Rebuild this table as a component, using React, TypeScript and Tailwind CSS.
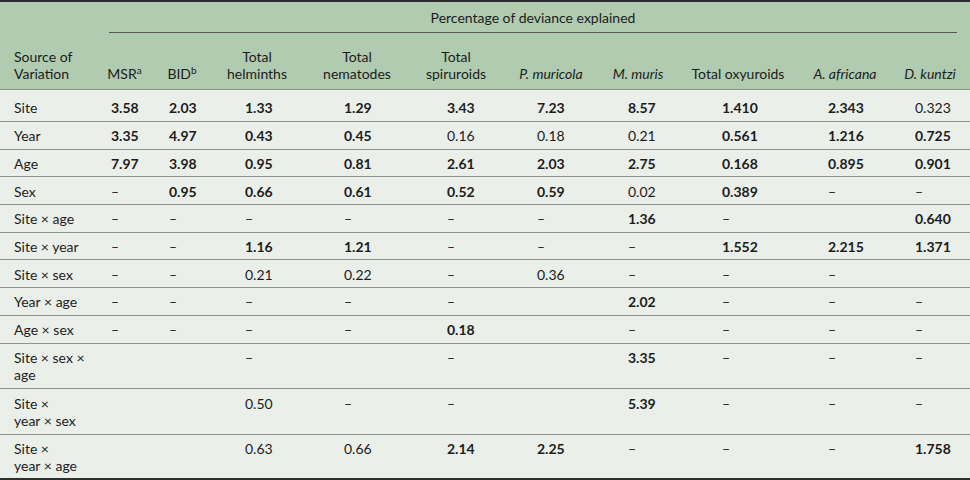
import React from "react";

// column template shared by header and body rows
const GRID =
  "grid grid-cols-[95px_59px_56px_94px_106px_92px_98px_76px_124px_90px_80px]";

// left offset of the numbers in each data column (numbers are left-aligned in a centred block)
const NUM_PAD = [
  "pl-[16px]",
  "pl-[15px]",
  "pl-[35px]",
  "pl-[40px]",
  "pl-[37px]",
  "pl-[35px]",
  "pl-[28px]",
  "pl-[46px]",
  "pl-[28px]",
  "pl-[25px]",
];

type Cell = string; // "*" prefix means bold, "" means empty

const rows: { label: string[]; values: Cell[] }[] = [
  { label: ["Site"], values: ["*3.58", "*2.03", "*1.33", "*1.29", "*3.43", "*7.23", "*8.57", "*1.410", "*2.343", "0.323"] },
  { label: ["Year"], values: ["*3.35", "*4.97", "*0.43", "*0.45", "0.16", "0.18", "0.21", "*0.561", "*1.216", "*0.725"] },
  { label: ["Age"], values: ["*7.97", "*3.98", "*0.95", "*0.81", "*2.61", "*2.03", "*2.75", "*0.168", "*0.895", "*0.901"] },
  { label: ["Sex"], values: ["–", "*0.95", "*0.66", "*0.61", "*0.52", "*0.59", "0.02", "*0.389", "–", "–"] },
  { label: ["Site × age"], values: ["–", "–", "–", "–", "–", "–", "*1.36", "–", "", "*0.640"] },
  { label: ["Site × year"], values: ["–", "–", "*1.16", "*1.21", "–", "–", "–", "*1.552", "*2.215", "*1.371"] },
  { label: ["Site × sex"], values: ["–", "–", "0.21", "0.22", "–", "0.36", "–", "–", "–", ""] },
  { label: ["Year × age"], values: ["–", "–", "–", "–", "–", "", "*2.02", "–", "–", "–"] },
  { label: ["Age × sex"], values: ["–", "–", "–", "–", "*0.18", "", "–", "–", "–", "–"] },
  { label: ["Site × sex ×", "age"], values: ["", "", "–", "", "–", "", "*3.35", "–", "–", "–"] },
  { label: ["Site ×", "year × sex"], values: ["", "", "0.50", "–", "–", "", "*5.39", "–", "–", "–"] },
  { label: ["Site ×", "year × age"], values: ["", "", "0.63", "0.66", "*2.14", "*2.25", "–", "–", "–", "*1.758"] },
];

function HeaderLabel({ children }: { children: React.ReactNode }) {
  return (
    <div className="flex items-end justify-center text-center whitespace-nowrap">
      <div>{children}</div>
    </div>
  );
}

export default function App() {
  return (
    <div
      className="w-[970px] h-[480px] overflow-hidden bg-[#ebefea] text-[#1c1c1c] text-[14px] leading-[17px]"
      style={{ fontFamily: "Lato, 'Noto Sans', sans-serif" }}
    >
      <div className="h-[480px] flex flex-col border-t-2 border-b-2 border-[#2e2e2e]">
        {/* header */}
        <div className="bg-[#b0cbaf] border-b border-[#8d948c]">
          <div className={GRID}>
            <div />
            <div className="col-span-10 pl-[14px] pr-[13px]">
              <div className="h-[31px] text-center pt-[6.5px] border-b border-[#555a55]">
                Percentage of deviance explained
              </div>
            </div>
          </div>
          <div className={`${GRID} h-[56px] pb-[7.5px]`}>
            <div className="flex items-end pl-[14px] whitespace-nowrap">
              <div>
                Source of
                <br />
                Variation
              </div>
            </div>
            <HeaderLabel>
              MSR<sup className="text-[10px]">a</sup>
            </HeaderLabel>
            <HeaderLabel>
              BID<sup className="text-[10px]">b</sup>
            </HeaderLabel>
            <HeaderLabel>
              Total
              <br />
              helminths
            </HeaderLabel>
            <HeaderLabel>
              Total
              <br />
              nematodes
            </HeaderLabel>
            <HeaderLabel>
              Total
              <br />
              spiruroids
            </HeaderLabel>
            <HeaderLabel>
              <i>P. muricola</i>
            </HeaderLabel>
            <HeaderLabel>
              <i>M. muris</i>
            </HeaderLabel>
            <HeaderLabel>Total oxyuroids</HeaderLabel>
            <HeaderLabel>
              <i>A. africana</i>
            </HeaderLabel>
            <HeaderLabel>
              <i>D. kuntzi</i>
            </HeaderLabel>
          </div>
        </div>

        {/* body */}
        {rows.map((row, i) => {
          const first = i === 0;
          const last = i === rows.length - 1;
          const double = row.label.length > 1;
          let size = "h-[27.7px] border-b border-[#8d948c]";
          if (first) size = "h-[32px] border-b border-[#8d948c]";
          else if (last) size = "flex-1";
          else if (double) size = "h-[45.7px] border-b border-[#8d948c]";
          return (
            <div
              key={row.label.join(" ")}
              className={`${GRID} shrink-0 overflow-hidden ${size} ${
                first ? "pt-[9.35px]" : "pt-[5.35px]"
              }`}
            >
              <div className="pl-[14px] whitespace-nowrap">
                {row.label.map((part, k) => (
                  <div key={k}>{part}</div>
                ))}
              </div>
              {row.values.map((v, j) => {
                const bold = v.startsWith("*");
                return (
                  <div key={j} className={`${NUM_PAD[j]} ${bold ? "font-bold" : ""}`}>
                    {bold ? v.slice(1) : v}
                  </div>
                );
              })}
            </div>
          );
        })}
      </div>
    </div>
  );
}
